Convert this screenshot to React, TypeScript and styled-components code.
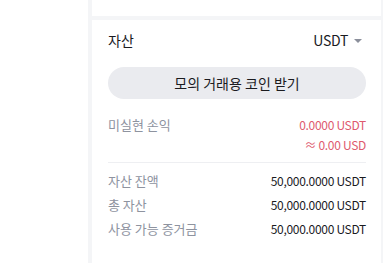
import React from 'react';
import styled, { createGlobalStyle } from 'styled-components';

const GlobalStyle = createGlobalStyle`
  html, body {
    margin: 0;
    padding: 0;
    background: #f4f5f7;
    font-family: "Noto Sans CJK KR", "Noto Sans", sans-serif;
  }
  * { box-sizing: border-box; }
`;

const rows = [
  { label: '자산 잔액', value: '50,000.0000 USDT' },
  { label: '총 자산', value: '50,000.0000 USDT' },
  { label: '사용 가능 증거금', value: '50,000.0000 USDT' },
];

export default function App() {
  return (
    <>
      <GlobalStyle />
      <Page>
        <SideColumn />
        <MainColumn>
          <TopPanel />
          <AssetPanel>
            <Header>
              <Title>자산</Title>
              <CoinSelect>
                USDT
                <Caret />
              </CoinSelect>
            </Header>

            <ClaimButton>모의 거래용 코인 받기</ClaimButton>

            <PnlRow>
              <Label>미실현 손익</Label>
              <PnlValues>
                <PnlText>0.0000 USDT</PnlText>
                <PnlText>≈ 0.00 USD</PnlText>
              </PnlValues>
            </PnlRow>

            <Divider />

            <List>
              {rows.map((r) => (
                <Row key={r.label}>
                  <Label>{r.label}</Label>
                  <Value>{r.value}</Value>
                </Row>
              ))}
            </List>
          </AssetPanel>
        </MainColumn>
      </Page>
    </>
  );
}

// Layout ---------------------------------------------------------
const Page = styled.div`
  display: flex;
  height: 263px;
  width: 383px;
  overflow: hidden;
`;

const SideColumn = styled.div`
  width: 88px;
  background: #ffffff;
`;

const MainColumn = styled.div`
  width: 289px;
  margin-left: 4px;
  display: flex;
  flex-direction: column;
  gap: 4px;
`;

const TopPanel = styled.div`
  height: 16px;
  background: #ffffff;
`;

const AssetPanel = styled.div`
  flex: 1;
  background: #ffffff;
  padding: 0 15px 0 16px;
  display: flex;
  flex-direction: column;
`;

// Header ---------------------------------------------------------
const Header = styled.div`
  height: 40px;
  display: flex;
  align-items: center;
  justify-content: space-between;
`;

const Title = styled.div`
  font-size: 14px;
  color: #1b1b1f;
`;

const CoinSelect = styled.div`
  display: flex;
  align-items: center;
  gap: 6px;
  padding-right: 4px;
  font-size: 14px;
  letter-spacing: -0.3px;
  color: #1b1b1f;
`;

const Caret = styled.span`
  width: 0;
  height: 0;
  border-left: 4px solid transparent;
  border-right: 4px solid transparent;
  border-top: 4px solid #8b8f9b;
  margin-top: 1px;
`;

// Button ---------------------------------------------------------
const ClaimButton = styled.button`
  margin-top: 7px;
  height: 32px;
  border: none;
  border-radius: 16px;
  background: #eaebef;
  font-family: inherit;
  font-size: 14px;
  color: #1b1b1f;
  cursor: pointer;
`;

// PnL ---------------------------------------------------------
const PnlRow = styled.div`
  margin-top: 16px;
  display: flex;
  justify-content: space-between;
  align-items: flex-start;
`;

const PnlValues = styled.div`
  display: flex;
  flex-direction: column;
  align-items: flex-end;
`;

const PnlText = styled.span`
  font-size: 12px;
  line-height: 20px;
  letter-spacing: -0.3px;
  color: #de5a6e;
`;

const Label = styled.span`
  font-size: 13px;
  line-height: 20px;
  color: #8e939f;
`;

const Divider = styled.div`
  height: 1px;
  background: #eeeff2;
  margin-top: 7px;
`;

// Balances ---------------------------------------------------------
const List = styled.div`
  margin-top: 8px;
  display: flex;
  flex-direction: column;
  gap: 4px;
`;

const Row = styled.div`
  display: flex;
  justify-content: space-between;
  align-items: center;
`;

const Value = styled.span`
  font-size: 12px;
  line-height: 20px;
  letter-spacing: -0.3px;
  color: #1b1b1f;
`;
